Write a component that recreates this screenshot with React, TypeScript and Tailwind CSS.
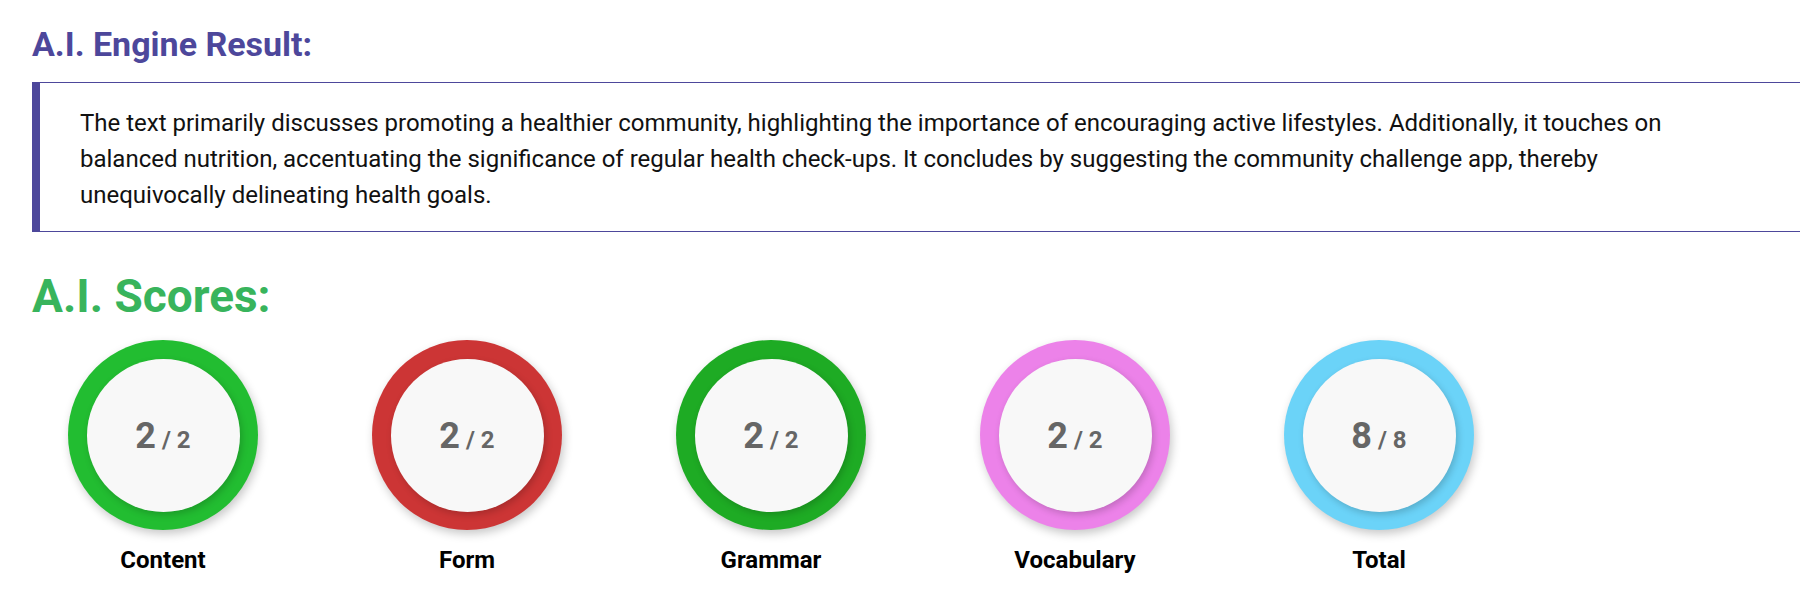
import React from "react";

const scores = [
  { label: "Content", score: 2, max: 2, ring: "bg-[#22bd31]" },
  { label: "Form", score: 2, max: 2, ring: "bg-[#cc3535]" },
  { label: "Grammar", score: 2, max: 2, ring: "bg-[#1eab24]" },
  { label: "Vocabulary", score: 2, max: 2, ring: "bg-[#ec82e9]" },
  { label: "Total", score: 8, max: 8, ring: "bg-[#6bd3f8]" },
];

const ScoreCircle = ({ label, score, max, ring }: (typeof scores)[number]) => {
  return (
    <div className="flex flex-col items-center w-[190px]">
      <div
        className={`${ring} w-[190px] h-[190px] rounded-full flex items-center justify-center shadow-[2px_4px_10px_rgba(0,0,0,0.22)]`}
      >
        <div className="w-[153px] h-[153px] rounded-full bg-[#f8f8f8] flex items-center justify-center shadow-[2px_3px_7px_rgba(0,0,0,0.18)]">
          <p className="text-[#666666] font-bold leading-none pt-[2px]">
            <span className="text-[36px]">{score}</span>
            <span className="text-[24px]"> / {max}</span>
          </p>
        </div>
      </div>
      <p className="mt-[14px] text-[24px] leading-[32px] font-bold text-black">{label}</p>
    </div>
  );
};

export default function App() {
  return (
    <div className="w-full bg-white pt-[26px] pl-[32px] font-['Roboto',sans-serif] min-h-[600px]">
      <h2 className="text-[34px] leading-[36px] font-bold text-[#4d479b]">A.I. Engine Result:</h2>

      <div className="mt-[20px] border-l-[8px] border-y border-[#4d479b] pl-[40px] pr-[110px] pt-[22px] pb-[18px]">
        <p className="text-[24px] leading-[36px] text-[#111111]">
          The text primarily discusses promoting a healthier community, highlighting the importance of
          encouraging active lifestyles. Additionally, it touches on balanced nutrition, accentuating the
          significance of regular health check-ups. It concludes by suggesting the community challenge app,
          thereby unequivocally delineating health goals.
        </p>
      </div>

      <h1 className="mt-[36px] text-[46px] leading-[56px] font-bold text-[#38b45c]">A.I. Scores:</h1>

      <div className="mt-[16px] pl-[36px] flex gap-[114px]">
        {scores.map((s, index) => (
          <ScoreCircle key={index} {...s} />
        ))}
      </div>
    </div>
  );
}
